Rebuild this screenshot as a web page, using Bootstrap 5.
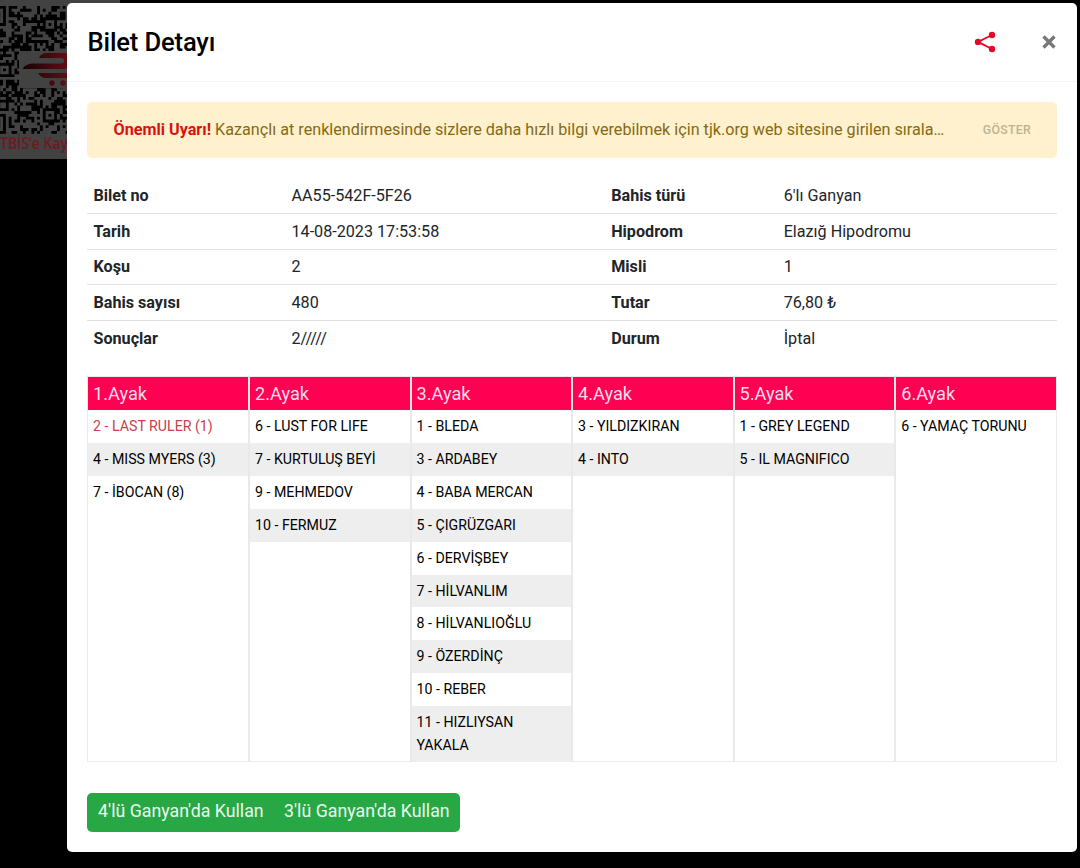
<!DOCTYPE html>
<html lang="tr">
<head>
<meta charset="utf-8">
<meta name="viewport" content="width=device-width, initial-scale=1">
<title>Bilet Detayı</title>
<link rel="stylesheet" href="https://cdn.jsdelivr.net/npm/bootstrap@5.3.0/dist/css/bootstrap.min.css">
<style>
  html, body { height: 100%; }
  body { background: #000; overflow: hidden; font-family: Roboto, "Liberation Sans", sans-serif; color: #212529; }
  .etbis { left: 0; top: 0; width: 120px; height: 160px; }
  .ticket { margin: 3px 3px 0 67px; height: 849px; border-radius: 5px; background: #fff; }
  .ticket-head { height: 79px; padding: 0 21px 0 20.5px; border-bottom: 1px solid #f3f3f3; }
  .ticket-title { font-size: 25.6px; font-weight: 500; line-height: 1; color: #000; letter-spacing: -.15px; padding-top: 2px; }
  .icon-btn { border: 0; background: none; padding: 0; line-height: 0; }
  .ticket-body { padding: 20px 20px 0; }
  .notice { height: 56px; padding: 0 26px 0 26.5px; background: #fff1cd; color: #856a14; border-radius: 5px; font-size: 16.18px; }
  .notice strong { color: #d8120f; font-weight: 700; }
  .notice-text { width: 834px; }
  .notice .show-more { font-size: 12.3px; font-weight: 500; color: #bdb391; letter-spacing: .3px; }
  .facts { margin-top: 20px; font-size: 16.15px; }
  .facts-row { height: 35.75px; border-bottom: 1px solid #dee2e6; padding: 1px 0 0 6.5px; }
  .facts-row:last-child { border-bottom: 0; }
  .facts-row > :nth-child(1) { width: 198px; }
  .facts-row > :nth-child(2) { width: 319.7px; }
  .facts-row > :nth-child(3) { width: 172.5px; }
  .facts dt { font-weight: 700; }
  .facts dt, .facts dd { margin: 0; }
  .legs { margin-top: 19px; height: 386px; border: 1px solid #ebebeb; grid-template-columns: 162px 161.5px 161.5px 161.5px 161.7px 1fr; }
  .leg { border-right: 2px solid #e7e9ea; }
  .leg:last-child { border-right: 0; }
  .leg-name { height: 33.4px; line-height: 33px; padding-left: 5px; background: #ff0053; color: #ffdcea; font-size: 18.2px; }
  .leg li { padding: 5px 5px 4.9px; font-size: 14.2px; line-height: 23px; color: #000; }
  .leg li:nth-child(even) { background: #eee; }
  .leg li.scratched { color: #c9404b; }
  .use-btns { margin: 31px 0 0 .4px; }
  .use-btns .btn { height: 39px; padding: 0 10.7px; font-size: 17.78px; line-height: 1; background: #28a745; border: 0; color: #e8fbed; border-radius: 5px; }
</style>
</head>
<body>
<svg class="etbis position-absolute" viewBox="0 0 120 160">
  <defs>
    <linearGradient id="cart" gradientUnits="userSpaceOnUse" x1="22" x2="68" y1="0" y2="0"><stop offset="0" stop-color="#120405"/><stop offset="1" stop-color="#640d14"/></linearGradient>
  </defs>
  <rect width="120" height="159" fill="#424242"/>
  <g id="qr"></g>
  <path fill="#424242" d="M19 51H70V88H19z"/>
  <g fill="url(#cart)">
    <path d="M39 58q2-5 8-5h18q6 0 6 7.500T65 69H22.500q3-5.500 11-5.500H61q3 0 3-2.700T61 58z"/>
    <path d="M38 73h34v5H46q-5 0-8-5z"/>
    <circle cx="52" cy="83" r="2.700"/><circle cx="63" cy="83" r="2.700"/>
  </g>
  <text x="0" y="149" font-family="'Open Sans', sans-serif" font-weight="600" font-size="15.500" fill="#711820" textLength="68" lengthAdjust="spacingAndGlyphs">TBİS’e Kay</text>
</svg>

<main class="ticket position-relative">
  <header class="ticket-head d-flex align-items-center">
    <h1 class="ticket-title m-0 me-auto">Bilet Detayı</h1>
    <button class="icon-btn" aria-label="Paylaş">
      <svg width="22" height="22" viewBox="0 0 22 22" fill="#e00b2a"><path d="M18 4L4 10.900 18 18" fill="none" stroke="#e00b2a" stroke-width="1.900"/><circle cx="4" cy="10.900" r="3.200"/><circle cx="18" cy="4" r="3.200"/><circle cx="18" cy="18" r="3.200"/></svg>
    </button>
    <button class="icon-btn ms-5" aria-label="Kapat">
      <svg width="14" height="14" viewBox="0 0 14 14" style="margin-left:-2px"><path d="M1.500 1.500l11 11m0-11l-11 11" stroke="#777" stroke-width="3.300"/></svg>
    </button>
  </header>
  <div class="ticket-body">
    <div class="notice d-flex align-items-center justify-content-between">
      <div class="notice-text text-truncate"><strong>Önemli Uyarı!</strong> Kazançlı at renklendirmesinde sizlere daha hızlı bilgi verebilmek için tjk.org web sitesine girilen sırala…</div>
      <span class="show-more">GÖSTER</span>
    </div>
    <dl class="facts mb-0">
      <div class="facts-row d-flex align-items-center"><dt>Bilet no</dt><dd>AA55-542F-5F26</dd><dt>Bahis türü</dt><dd>6'lı Ganyan</dd></div>
      <div class="facts-row d-flex align-items-center"><dt>Tarih</dt><dd>14-08-2023 17:53:58</dd><dt>Hipodrom</dt><dd>Elazığ Hipodromu</dd></div>
      <div class="facts-row d-flex align-items-center"><dt>Koşu</dt><dd>2</dd><dt>Misli</dt><dd>1</dd></div>
      <div class="facts-row d-flex align-items-center"><dt>Bahis sayısı</dt><dd>480</dd><dt>Tutar</dt><dd>76,80 ₺</dd></div>
      <div class="facts-row d-flex align-items-center"><dt>Sonuçlar</dt><dd>2/////</dd><dt>Durum</dt><dd>İptal</dd></div>
    </dl>
    <div class="legs d-grid">
      <div class="leg"><div class="leg-name">1.Ayak</div><ul class="list-unstyled m-0"><li class="scratched">2 - LAST RULER (1)</li><li>4 - MISS MYERS (3)</li><li>7 - İBOCAN (8)</li></ul></div>
      <div class="leg"><div class="leg-name">2.Ayak</div><ul class="list-unstyled m-0"><li>6 - LUST FOR LIFE</li><li>7 - KURTULUŞ BEYİ</li><li>9 - MEHMEDOV</li><li>10 - FERMUZ</li></ul></div>
      <div class="leg"><div class="leg-name">3.Ayak</div><ul class="list-unstyled m-0"><li>1 - BLEDA</li><li>3 - ARDABEY</li><li>4 - BABA MERCAN</li><li>5 - ÇIGRÜZGARI</li><li>6 - DERVİŞBEY</li><li>7 - HİLVANLIM</li><li>8 - HİLVANLIOĞLU</li><li>9 - ÖZERDİNÇ</li><li>10 - REBER</li><li>11 - HIZLIYSAN<br>YAKALA</li></ul></div>
      <div class="leg"><div class="leg-name">4.Ayak</div><ul class="list-unstyled m-0"><li>3 - YILDIZKIRAN</li><li>4 - INTO</li></ul></div>
      <div class="leg"><div class="leg-name">5.Ayak</div><ul class="list-unstyled m-0"><li>1 - GREY LEGEND</li><li>5 - IL MAGNIFICO</li></ul></div>
      <div class="leg"><div class="leg-name">6.Ayak</div><ul class="list-unstyled m-0"><li>6 - YAMAÇ TORUNU</li></ul></div>
    </div>
    <div class="use-btns btn-group">
      <button class="btn">4'lü Ganyan'da Kullan</button><button class="btn">3'lü Ganyan'da Kullan</button>
    </div>
  </div>
</main>
<script src="https://cdn.jsdelivr.net/npm/bootstrap@5.3.0/dist/js/bootstrap.bundle.min.js"></script>
<script>
  // QR modules: seeded noise plus finder and alignment squares
  const m = 2.84, x0 = -14, y0 = 6, cols = 30, rows = 45;
  let seed = 71;
  const rnd = () => (seed = (seed * 16807) % 2147483647) / 2147483647;
  const grid = Array.from({ length: rows }, () => Array.from({ length: cols }, () => rnd() < .52));
  const square = (cx, cy, r, quiet) => {
    const e = r + quiet;
    for (let y = -e; y <= e; y++) for (let x = -e; x <= e; x++) {
      const d = Math.max(Math.abs(x), Math.abs(y));
      if (grid[cy + y] && cx + x >= 0 && cx + x < cols) grid[cy + y][cx + x] = d === r || d < r - 1;
    }
  };
  square(3, 3, 3, 1); square(3, 41, 3, 1);
  square(22, 6, 2, 0); square(22, 38, 2, 0); square(6, 22, 2, 0);
  let d = '';
  grid.forEach((row, y) => row.forEach((on, x) => { if (on) d += `M${(x0 + x * m).toFixed(2)} ${(y0 + y * m).toFixed(2)}h${m}v${m}h-${m}z`; }));
  document.getElementById('qr').innerHTML = `<path d="${d}" fill="#000"/>`;
</script>
</body>
</html>
